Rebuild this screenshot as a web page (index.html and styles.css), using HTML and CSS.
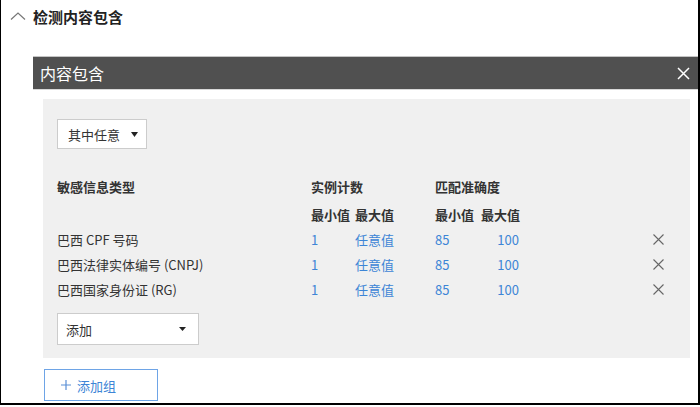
FILE: index.html
```html
<!DOCTYPE html>
<html lang="zh">
<head>
<meta charset="utf-8">
<link rel="stylesheet" href="styles.css">
</head>
<body>
<div class="frame">
  <div class="title-row">
    <svg class="chev" width="16" height="8" viewBox="0 0 16 8"><path d="M1 7.5 L8 1 L15 7.5" fill="none" stroke="#777" stroke-width="1.2"/></svg>
    <span class="title">检测内容包含</span>
  </div>
  <div class="section">
    <div class="bar">
      <span class="bar-title">内容包含</span>
      <svg class="bar-x" width="13" height="13" viewBox="0 0 13 13"><path d="M1 1 L12 12 M12 1 L1 12" stroke="#fff" stroke-width="1.5"/></svg>
    </div>
    <div class="panel">
      <div class="select small">
        <span>其中任意</span>
        <svg width="7" height="5" viewBox="0 0 7 5"><path d="M0 0 H7 L3.5 5 Z" fill="#222"/></svg>
      </div>
      <div class="table">
        <div class="th">敏感信息类型</div>
        <div class="th span2">实例计数</div>
        <div class="th span3">匹配准确度</div>

        <div class="sub"></div>
        <div class="sub">最小值</div>
        <div class="sub">最大值</div>
        <div class="sub">最小值</div>
        <div class="sub">最大值</div>
        <div class="sub"></div>

        <div class="cell name">巴西 CPF 号码</div>
        <div class="cell link">1</div>
        <div class="cell link">任意值</div>
        <div class="cell link">85</div>
        <div class="cell link right">100</div>
        <div class="cell x"><svg width="11" height="11" viewBox="0 0 11 11"><path d="M0.5 0.5 L10.5 10.5 M10.5 0.5 L0.5 10.5" stroke="#666" stroke-width="1.1"/></svg></div>

        <div class="cell name">巴西法律实体编号 (CNPJ)</div>
        <div class="cell link">1</div>
        <div class="cell link">任意值</div>
        <div class="cell link">85</div>
        <div class="cell link right">100</div>
        <div class="cell x"><svg width="11" height="11" viewBox="0 0 11 11"><path d="M0.5 0.5 L10.5 10.5 M10.5 0.5 L0.5 10.5" stroke="#666" stroke-width="1.1"/></svg></div>

        <div class="cell name">巴西国家身份证 (RG)</div>
        <div class="cell link">1</div>
        <div class="cell link">任意值</div>
        <div class="cell link">85</div>
        <div class="cell link right">100</div>
        <div class="cell x"><svg width="11" height="11" viewBox="0 0 11 11"><path d="M0.5 0.5 L10.5 10.5 M10.5 0.5 L0.5 10.5" stroke="#666" stroke-width="1.1"/></svg></div>
      </div>
      <div class="select add">
        <span>添加</span>
        <svg width="7" height="4" viewBox="0 0 7 4"><path d="M0 0 H7 L3.5 4 Z" fill="#222"/></svg>
      </div>
    </div>
    <div class="add-group">
      <svg width="10" height="10" viewBox="0 0 10 10"><path d="M5 0 V10 M0 5 H10" stroke="#5a8fd6" stroke-width="1.2"/></svg>
      <span>添加组</span>
    </div>
  </div>
</div>
</body>
</html>
```

FILE: styles.css
```css
* { box-sizing: border-box; }
html, body {
  margin: 0;
  padding: 0;
  background: #fff;
  width: 700px;
  height: 407px;
  overflow: hidden;
}
body {
  font-family: "Noto Sans CJK SC", "Noto Sans", sans-serif;
  color: #333;
  font-size: 13px;
}
.frame {
  width: 700px;
  height: 405px;
  border-left: 1px solid #000;
  border-right: 2px solid #000;
  border-bottom: 2px solid #000;
  overflow: hidden;
}
.title-row {
  display: flex;
  align-items: center;
  height: 34px;
  padding-left: 9px;
}
.chev { margin-right: 7px; margin-top: -3px; }
.title {
  font-size: 15px;
  font-weight: bold;
  color: #222;
  line-height: 20px;
}
.section {
  margin-top: 22px;
  margin-left: 32px;
}
.bar {
  height: 34px;
  background: #505050;
  border-top: 1px solid #c4c4c4;
  border-bottom: 1px solid #d8d8d8;
  display: flex;
  align-items: center;
  justify-content: space-between;
  padding: 0 8px 0 7px;
}
.bar-title {
  color: #fff;
  font-size: 16px;
  line-height: 20px;
}
.panel {
  margin: 9px 8px 0 10px;
  background: #f0f0f0;
  padding: 20px 0 13px 14px;
  height: 259px;
}
.select {
  background: #fff;
  border: 1px solid #ccc;
  display: flex;
  align-items: center;
  justify-content: space-between;
}
.select.small {
  width: 90px;
  height: 30px;
  padding: 0 8px 0 10px;
}
.select.add {
  width: 142px;
  height: 32px;
  padding: 0 12px 0 8px;
  margin-top: 11px;
}
.table {
  display: grid;
  grid-template-columns: 254px 44px 80px 46px 38px 1fr;
  margin-top: 28px;
  padding-right: 26px;
}
.th {
  font-weight: bold;
  line-height: 20px;
  height: 28px;
  white-space: nowrap;
}
.span2 { grid-column: span 2; }
.span3 { grid-column: span 3; }
.sub {
  font-weight: bold;
  line-height: 20px;
  height: 22px;
  white-space: nowrap;
}
.cell {
  height: 25px;
  line-height: 25px;
  white-space: nowrap;
}
.link { color: #3d85d6; }
.right { text-align: right; }
.x {
  display: flex;
  align-items: center;
  justify-content: flex-end;
}
.add-group {
  margin: 11px 0 0 11px;
  width: 114px;
  height: 32px;
  border: 1px solid #6ea4e6;
  display: flex;
  align-items: center;
  padding-left: 16px;
  gap: 6px;
  color: #3d85d6;
  font-size: 13px;
}
```
